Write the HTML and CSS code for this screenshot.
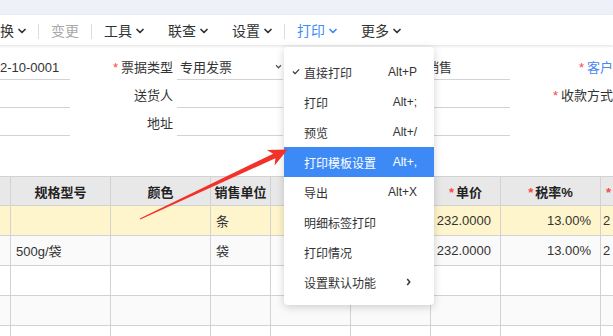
FILE: index.html
```html
<!DOCTYPE html>
<html lang="zh">
<head>
<meta charset="utf-8">
<title>销售单</title>
<link rel="stylesheet" href="styles.css">
</head>
<body>
<div class="page">
  <div class="topstrip"></div>
  <div class="toolbar">
    <div class="tb-item">换<svg class="chev" viewBox="0 0 8 6"><polyline points="1,1.5 4,4.5 7,1.5"/></svg></div>
    <span class="tb-sep"></span>
    <div class="tb-item disabled">变更</div>
    <span class="tb-sep"></span>
    <div class="tb-item">工具<svg class="chev" viewBox="0 0 8 6"><polyline points="1,1.5 4,4.5 7,1.5"/></svg></div>
    <div class="tb-item">联查<svg class="chev" viewBox="0 0 8 6"><polyline points="1,1.5 4,4.5 7,1.5"/></svg></div>
    <div class="tb-item">设置<svg class="chev" viewBox="0 0 8 6"><polyline points="1,1.5 4,4.5 7,1.5"/></svg></div>
    <span class="tb-sep"></span>
    <div class="tb-item active">打印<svg class="chev" viewBox="0 0 8 6"><polyline points="1,1.5 4,4.5 7,1.5"/></svg></div>
    <div class="tb-item">更多<svg class="chev" viewBox="0 0 8 6"><polyline points="1,1.5 4,4.5 7,1.5"/></svg></div>
  </div>

  <div class="form">
    <div class="f-input first">2-10-0001</div>
    <div class="f-label"><span class="req">*</span>票据类型</div>
    <div class="f-input select">专用发票<svg class="sel-chev" viewBox="0 0 8 6"><polyline points="1,1.5 4,4.5 7,1.5"/></svg></div>
    <div class="f-label"><span class="req">*</span>业务类型</div>
    <div class="f-input">销售</div>
    <div class="f-label edge"><span class="req">*</span><span class="link">客户</span></div>

    <div class="f-input first"></div>
    <div class="f-label">送货人</div>
    <div class="f-input"></div>
    <div class="f-label">联系电话</div>
    <div class="f-input"></div>
    <div class="f-label edge"><span class="req">*</span>收款方式</div>

    <div class="f-input first"></div>
    <div class="f-label">地址</div>
    <div class="f-input"></div>
    <div class="f-label">备注</div>
    <div class="f-input"></div>
    <div class="f-label edge"></div>
  </div>

  <table class="grid">
    <colgroup>
      <col class="c-w100"><col class="c-w100"><col class="c-w100"><col class="c-w60">
      <col class="c-w80"><col class="c-w80"><col class="c-w70"><col class="c-w100"><col class="c-w100">
    </colgroup>
    <thead>
      <tr>
        <th>商品名称</th><th>规格型号</th><th>颜色</th><th>销售单位</th>
        <th>数量</th><th>赠品</th><th><span class="req">*</span>单价</th><th><span class="req">*</span>税率%</th>
        <th class="left"><span class="req">*</span><span class="req">*</span><span class="red">含税单价</span></th>
      </tr>
    </thead>
    <tbody>
      <tr class="sel">
        <td></td><td></td><td></td><td>条</td><td></td><td></td>
        <td class="num">232.0000</td><td class="num">13.00%</td><td class="lnum">2 62.1600</td>
      </tr>
      <tr class="alt">
        <td></td><td>500g/袋</td><td></td><td>袋</td><td></td><td></td>
        <td class="num">232.0000</td><td class="num">13.00%</td><td class="lnum">2 62.1600</td>
      </tr>
      <tr><td></td><td></td><td></td><td></td><td></td><td></td><td></td><td></td><td></td></tr>
      <tr class="alt"><td></td><td></td><td></td><td></td><td></td><td></td><td></td><td></td><td></td></tr>
      <tr><td></td><td></td><td></td><td></td><td></td><td></td><td></td><td></td><td></td></tr>
    </tbody>
  </table>

  <div class="menu">
    <div class="m-item"><svg class="check" viewBox="0 0 9 7"><polyline points="1,3.5 3.5,6 8,1"/></svg><span>直接打印</span><span class="key">Alt+P</span></div>
    <div class="m-item"><span>打印</span><span class="key">Alt+;</span></div>
    <div class="m-item"><span>预览</span><span class="key">Alt+/</span></div>
    <div class="m-item hl"><span>打印模板设置</span><span class="key">Alt+,</span></div>
    <div class="m-item"><span>导出</span><span class="key">Alt+X</span></div>
    <div class="m-item"><span>明细标签打印</span></div>
    <div class="m-item"><span>打印情况</span></div>
    <div class="m-item"><span>设置默认功能</span><svg class="sub" viewBox="0 0 6 9"><polyline points="1.5,1 4.5,4.5 1.5,8"/></svg></div>
  </div>

  <svg class="arrow" viewBox="0 0 613 336">
    <polygon points="139.8,218.4 273.2,153.7 266.8,150 287.5,149.5 274.6,165.6 275.4,158.3 140.2,219.6"/>
  </svg>
</div>
</body>
</html>
```

FILE: styles.css
```css
* { box-sizing: border-box; }
html, body { margin: 0; padding: 0; }
body {
  width: 613px;
  height: 336px;
  overflow: hidden;
  background: #fff;
  font-family: "Liberation Sans", "Noto Sans CJK SC", sans-serif;
  color: #333;
}
.page {
  position: relative;
  width: 613px;
  height: 336px;
  overflow: hidden;
}
.topstrip {
  height: 15px;
  background: #eef1fa;
}
.toolbar {
  position: relative;
  z-index: 1;
  display: flex;
  align-items: center;
  height: 30px;
  margin-left: -12px;
  background: #fff;
  box-shadow: 0 1px 3px rgba(0, 0, 0, 0.13);
  font-size: 14px;
  color: #333;
}
.tb-item {
  display: flex;
  align-items: center;
  padding: 2px 12px 0;
  line-height: 28px;
  white-space: nowrap;
}
.tb-item.disabled { color: #a8a8a8; }
.tb-item.active { color: #3f8cf6; }
.chev {
  width: 8px;
  height: 6px;
  margin-left: 4px;
  fill: none;
  stroke: currentColor;
  stroke-width: 1.7;
  stroke-linecap: round;
  stroke-linejoin: round;
}
.tb-sep {
  width: 1px;
  height: 15px;
  margin-top: 2px;
  background: #dcdcdc;
}

.form {
  display: grid;
  grid-template-columns: 70px 107px 106px 139px 88px 103px;
  grid-auto-rows: 28px;
  margin-top: 7px;
  font-size: 13px;
  color: #333;
}
.f-input {
  position: relative;
  border-bottom: 1px solid #d3d3d3;
  padding: 5px 4px 0;
  line-height: 22px;
  white-space: nowrap;
}
.f-input.first { padding-left: 0; }
.f-input.select { padding-left: 3px; }
.sel-chev {
  position: absolute;
  right: 1px;
  top: 12px;
  width: 7px;
  height: 5px;
  fill: none;
  stroke: #555;
  stroke-width: 1.5;
}
.f-label {
  text-align: right;
  padding: 5px 4px 0 0;
  line-height: 22px;
  white-space: nowrap;
}
.f-label.edge { padding-right: 0; }
.req {
  color: #f5484d;
  margin-right: 3px;
}
.red { color: #f5484d; }
.link { color: #4a86f0; }

.grid {
  margin-top: 40px;
  margin-left: -90px;
  width: 790px;
  table-layout: fixed;
  border-collapse: collapse;
  font-size: 13px;
  color: #333;
}
.c-w100 { width: 100px; }
.c-w80 { width: 80px; }
.c-w70 { width: 70px; }
.c-w60 { width: 60px; }
.grid th, .grid td {
  border: 1px solid #d2d2d2;
  white-space: nowrap;
  overflow: hidden;
}
.grid th {
  height: 29px;
  background: #e8e8e8;
  font-weight: bold;
  color: #222;
  text-align: center;
  padding: 0 2px;
}
.grid th .req { margin-right: 2px; }
.grid th.left { text-align: left; padding-left: 5px; }
.grid td {
  height: 30px;
  padding: 0 5px;
  text-align: left;
}
.grid td.num { text-align: right; padding-right: 9px; }
.grid td.lnum { padding-left: 2px; }
.grid tr.sel td { background: #fff5cc; }
.grid tr.alt td { background: #fafafa; }

.menu {
  position: absolute;
  z-index: 5;
  left: 284px;
  top: 47px;
  width: 150px;
  padding: 10px 0 8px;
  background: #fff;
  border-radius: 4px;
  box-shadow: 0 2px 8px rgba(0, 0, 0, 0.18);
  font-size: 12px;
  color: #333;
}
.m-item {
  position: relative;
  display: flex;
  align-items: center;
  justify-content: space-between;
  height: 30px;
  padding: 0 17px 0 20px;
  white-space: nowrap;
}
.m-item.hl {
  background: #3d8af7;
  color: #fff;
}
.key { font-family: "Liberation Sans", sans-serif; }
.check {
  position: absolute;
  left: 8px;
  top: 11px;
  width: 8px;
  height: 7px;
  fill: none;
  stroke: #333;
  stroke-width: 1.3;
}
.sub {
  width: 5px;
  height: 8px;
  margin-right: 6px;
  fill: none;
  stroke: #333;
  stroke-width: 1.8;
}

.arrow {
  position: absolute;
  z-index: 10;
  left: 0;
  top: 0;
  width: 613px;
  height: 336px;
  pointer-events: none;
}
.arrow polygon { fill: #f2312a; }
```
